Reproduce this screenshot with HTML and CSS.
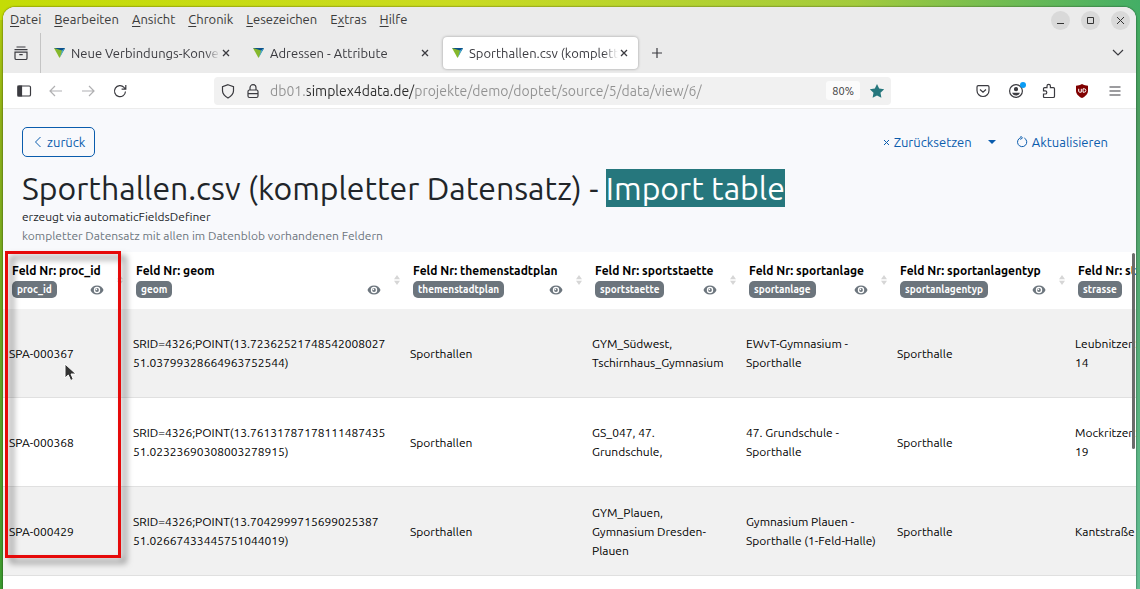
FILE: index.html
```html
<!DOCTYPE html>
<html lang="de">
<head>
  <meta charset="UTF-8" />
  <meta name="viewport" content="width=device-width, initial-scale=1.0" />
  <title>Sporthallen.csv (kompletter Datensatz) - Import table</title>
  <link rel="stylesheet" href="styles.css">
</head>
<body>
  <!-- shared icons -->
  <svg class="defs" width="0" height="0" aria-hidden="true">
    <symbol id="favicon" viewBox="0 0 11 10">
      <path d="M0 0h11L5.500 10z" fill="#86b82c"/>
      <path d="M0 0h11L9.500 3z" fill="#0b4f8a"/>
      <path d="M11 0L6 9.500 8 2.500z" fill="#45a5d8"/>
    </symbol>
    <symbol id="close" viewBox="0 0 8 8">
      <path d="M1 1l6 6M7 1L1 7" fill="none" stroke="currentColor" stroke-width="1.300"/>
    </symbol>
    <symbol id="eye" viewBox="0 0 14 10">
      <path d="M7 .5C3.800 .5 1.300 2.600.5 5c.8 2.400 3.300 4.500 6.500 4.500S12.700 7.400 13.500 5C12.700 2.600 10.200.5 7 .5z" fill="#6c757d"/>
      <circle cx="7" cy="5" r="3.200" fill="#fff"/>
      <circle cx="7" cy="5" r="1.900" fill="#6c757d"/>
      <circle cx="6.400" cy="4.400" r=".8" fill="#fff"/>
    </symbol>
    <symbol id="sort" viewBox="0 0 6 10">
      <path d="M3 0l3 4.200H0zM3 10L0 5.800h6z" fill="#d6d6d6"/>
    </symbol>
  </svg>

  <div class="window">
    <header class="titlebar">
      <nav class="menu">
        <a href="#"><u>D</u>atei</a>
        <a href="#"><u>B</u>earbeiten</a>
        <a href="#"><u>A</u>nsicht</a>
        <a href="#"><u>C</u>hronik</a>
        <a href="#"><u>L</u>esezeichen</a>
        <a href="#">E<u>x</u>tras</a>
        <a href="#"><u>H</u>ilfe</a>
      </nav>
      <div class="window-buttons">
        <button aria-label="Minimieren"><svg width="9" height="9"><path d="M1 7.500h7"/></svg></button>
        <button aria-label="Maximieren"><svg width="9" height="9"><path d="M1.500 1.500h6v6h-6z"/></svg></button>
        <button aria-label="Schließen"><svg width="9" height="9"><path d="M1 1l7 7M8 1L1 8"/></svg></button>
      </div>
    </header>

    <div class="tabbar">
      <button class="recent" aria-label="Zuletzt angesehen">
        <svg class="icon" width="16" height="16"><path d="M3.500 2h9M1.500 4.700h13M2 7.200h12v6q0 1.300-1.300 1.300H3.300Q2 14.500 2 13.200zM6.300 9.700h3.400"/></svg>
      </button>
      <div class="tab">
        <svg width="11" height="10"><use href="#favicon"/></svg>
        <span class="tab-title">Neue Verbindungs-Konvertierung</span>
        <button aria-label="Tab schließen"><svg width="8" height="8"><use href="#close"/></svg></button>
      </div>
      <div class="tab">
        <svg width="11" height="10"><use href="#favicon"/></svg>
        <span class="tab-title">Adressen - Attribute</span>
        <button aria-label="Tab schließen"><svg width="8" height="8"><use href="#close"/></svg></button>
      </div>
      <div class="tab active">
        <svg width="11" height="10"><use href="#favicon"/></svg>
        <span class="tab-title">Sporthallen.csv (kompletter Datensatz)</span>
        <button aria-label="Tab schließen"><svg width="8" height="8"><use href="#close"/></svg></button>
      </div>
      <button class="new-tab" aria-label="Neuer Tab">
        <svg class="icon" width="12" height="12"><path d="M6 1v10M1 6h10"/></svg>
      </button>
      <button class="all-tabs" aria-label="Alle Tabs">
        <svg class="icon" width="12" height="8"><path d="M1 1l5 5 5-5"/></svg>
      </button>
    </div>

    <div class="toolbar">
      <div class="nav-buttons">
        <button aria-label="Seitenleiste">
          <svg class="icon" width="16" height="16"><rect x="2" y="3" width="12.500" height="10" rx="1.300"/><path d="M2 3h3.500v10H2z" fill="#3b3b40"/></svg>
        </button>
        <button class="faded" aria-label="Zurück">
          <svg class="icon" width="16" height="16"><path d="M14 8H2.500M7 3L2 8l5 5"/></svg>
        </button>
        <button class="faded" aria-label="Vor">
          <svg class="icon" width="16" height="16"><path d="M2 8h11.500M9 3l5 5-5 5"/></svg>
        </button>
        <button aria-label="Neu laden">
          <svg class="icon" width="16" height="16"><path d="M13.500 8.500A5.500 5.500 0 1 1 12 4.300l1.500 1.500M13.800 2v4.200H9.600"/></svg>
        </button>
      </div>

      <div class="urlbar">
        <svg class="icon" width="16" height="16"><path d="M8 1.700l5.500 2v4.100c0 3.400-2.200 5.400-5.500 7.200-3.300-1.800-5.500-3.800-5.500-7.200V3.700z"/></svg>
        <svg class="icon" width="16" height="16"><rect x="3" y="7" width="10" height="7.500" rx="1.500"/><path d="M5 7V4.700a3 3 0 0 1 6 0V7M3 10.700h10"/></svg>
        <input class="url" type="text" aria-label="Adresse" value="db01.simplex4data.de/projekte/demo/doptet/source/5/data/view/6/">
        <button class="zoom">80%</button>
        <button aria-label="Lesezeichen bearbeiten">
          <svg width="16" height="16"><path d="M8 1l2.200 4.600 5 .7-3.700 3.500.9 5L8 12.400 3.600 14.800l.9-5L.8 6.300l5-.7z" fill="#26777d"/></svg>
        </button>
      </div>

      <div class="tools">
        <button aria-label="Pocket">
          <svg class="icon" width="16" height="16"><path d="M3.300 2.700h9.400q1.300 0 1.300 1.300v3.500a6 6 0 0 1-12 0V4q0-1.300 1.300-1.300zM5 6.500l3 2.800 3-2.800"/></svg>
        </button>
        <button class="account" aria-label="Konto">
          <svg class="icon" width="16" height="16"><circle cx="8" cy="8" r="6.400"/><circle cx="8" cy="6.200" r="1.500" fill="#3b3b40"/><path d="M5 10.300h6c-.5 1.200-1.700 1.700-3 1.700s-2.500-.5-3-1.700z" fill="#3b3b40"/></svg>
          <span class="dot"></span>
        </button>
        <button aria-label="Erweiterungen">
          <svg class="icon" width="16" height="16"><path d="M6 4.700V3a1.700 1.700 0 0 1 3.400 0v1.700h3q1.100 0 1.100 1.100v7.400q0 1.300-1.300 1.300H3.500q-1 0-1-1V11h1.700a1.600 1.600 0 0 0 0-3.200H2.500V5.700q0-1 1-1z"/></svg>
        </button>
        <button aria-label="uBlock Origin">
          <svg width="16" height="16"><path d="M8 1c2 1.200 4 1.700 6 1.700v5c0 3.300-2.500 5.600-6 7.300-3.500-1.700-6-4-6-7.300v-5C4 2.700 6 2.200 8 1z" fill="#800000"/><path d="M4.700 5.800v2.400q0 1 1 1h1.600V5.800M9 5.800h1.200a1.500 1.500 0 0 1 0 3.400H9z" fill="none" stroke="#fff"/></svg>
        </button>
        <button aria-label="Menü">
          <svg class="icon" width="16" height="16"><path d="M2.500 4h11M2.500 8h11M2.500 12h11"/></svg>
        </button>
      </div>
    </div>

    <main class="page">
      <section class="page-head">
        <div class="actions">
          <a class="back" href="#"><svg width="8" height="12"><path d="M6.500 1l-5 5 5 5"/></svg>zurück</a>
          <div class="links">
            <a href="#"><svg width="7" height="7"><path d="M1 1l5 5M6 1L1 6"/></svg>Zurücksetzen</a>
            <button class="caret" aria-label="Mehr"></button>
            <a href="#"><svg width="12" height="12"><path d="M8.300 2A4.600 4.600 0 1 1 5 1.600M4.300 0l2.200 1.700L4.500 3.700"/></svg>Aktualisieren</a>
          </div>
        </div>
        <h1>Sporthallen.csv (kompletter Datensatz) - <mark>Import table</mark></h1>
        <p>erzeugt via automaticFieldsDefiner</p>
        <p class="muted">kompletter Datensatz mit allen im Datenblob vorhandenen Feldern</p>
      </section>

      <section class="table-wrap">
        <table>
          <colgroup>
            <col class="c-id"><col class="c-geom"><col class="c-plan"><col class="c-staette"><col class="c-anlage"><col class="c-typ"><col class="c-strasse">
          </colgroup>
          <thead>
            <tr>
              <th><div class="field"><div class="field-info">Feld Nr: proc_id<div class="field-row"><span class="badge">proc_id</span><svg width="14" height="10"><use href="#eye"/></svg></div></div><svg width="6" height="10"><use href="#sort"/></svg></div></th>
              <th><div class="field"><div class="field-info">Feld Nr: geom<div class="field-row"><span class="badge">geom</span><svg width="14" height="10"><use href="#eye"/></svg></div></div><svg width="6" height="10"><use href="#sort"/></svg></div></th>
              <th><div class="field"><div class="field-info">Feld Nr: themenstadtplan<div class="field-row"><span class="badge">themenstadtplan</span><svg width="14" height="10"><use href="#eye"/></svg></div></div><svg width="6" height="10"><use href="#sort"/></svg></div></th>
              <th><div class="field"><div class="field-info">Feld Nr: sportstaette<div class="field-row"><span class="badge">sportstaette</span><svg width="14" height="10"><use href="#eye"/></svg></div></div><svg width="6" height="10"><use href="#sort"/></svg></div></th>
              <th><div class="field"><div class="field-info">Feld Nr: sportanlage<div class="field-row"><span class="badge">sportanlage</span><svg width="14" height="10"><use href="#eye"/></svg></div></div><svg width="6" height="10"><use href="#sort"/></svg></div></th>
              <th><div class="field"><div class="field-info">Feld Nr: sportanlagentyp<div class="field-row"><span class="badge">sportanlagentyp</span><svg width="14" height="10"><use href="#eye"/></svg></div></div><svg width="6" height="10"><use href="#sort"/></svg></div></th>
              <th><div class="field"><div class="field-info">Feld Nr: strasse<div class="field-row"><span class="badge">strasse</span><svg width="14" height="10"><use href="#eye"/></svg></div></div><svg width="6" height="10"><use href="#sort"/></svg></div></th>
            </tr>
          </thead>
          <tbody>
            <tr>
              <td>SPA-000367</td>
              <td>SRID=4326;POINT(13.72362521748542008027 51.03799328664963752544)</td>
              <td>Sporthallen</td>
              <td>GYM_Südwest,<br>Tschirnhaus_Gymnasium</td>
              <td>EWvT-Gymnasium -<br>Sporthalle</td>
              <td>Sporthalle</td>
              <td>Leubnitzer Str.<br>14</td>
            </tr>
            <tr>
              <td>SPA-000368</td>
              <td>SRID=4326;POINT(13.76131787178111487435 51.02323690308003278915)</td>
              <td>Sporthallen</td>
              <td>GS_047, 47.<br>Grundschule,</td>
              <td>47. Grundschule -<br>Sporthalle</td>
              <td>Sporthalle</td>
              <td>Mockritzer Str.<br>19</td>
            </tr>
            <tr>
              <td>SPA-000429</td>
              <td>SRID=4326;POINT(13.7042999715699025387 51.02667433445751044019)</td>
              <td>Sporthallen</td>
              <td>GYM_Plauen,<br>Gymnasium Dresden-<br>Plauen</td>
              <td>Gymnasium Plauen -<br>Sporthalle (1-Feld-Halle)</td>
              <td>Sporthalle</td>
              <td>Kantstraße 2</td>
            </tr>
          </tbody>
        </table>
        <div class="scroll-thumb"></div>
        <div class="highlight"></div>
        <svg class="cursor" width="13" height="19" viewBox="0 0 13 19"><path d="M1 1v14l3.300-3 2.400 5.500 2.600-1.200L7 11h5z" fill="#333" stroke="#fff"/></svg>
      </section>
    </main>
  </div>
</body>
</html>
```

FILE: styles.css
```css
* {
  margin: 0;
  padding: 0;
  box-sizing: border-box;
}

body {
  height: 100vh;
  padding: 7px 4px 0 3px;
  overflow: hidden;
  font-family: Ubuntu, "Noto Sans", sans-serif;
  font-size: 12px;
  color: #000;
  background:
    linear-gradient(#b6cf0a, #8fb018 20%, #3c9a30) left / 50% 100% no-repeat,
    linear-gradient(#3fae5f, #4c9d60 20%, #62c094) right / 50% 100% no-repeat;
}

/* desktop strip above the window */
body::before {
  content: '';
  position: absolute;
  top: 0;
  left: 0;
  right: 0;
  height: 20px;
  z-index: -1;
  background: linear-gradient(90deg, #c4dc06, #cadb20 40%, #a3cb3c 75%, #43ae66);
}

a {
  color: inherit;
  text-decoration: none;
}

button {
  display: flex;
  align-items: center;
  justify-content: center;
  border: 0;
  background: none;
  font: inherit;
  color: inherit;
}

svg {
  flex: none;
}

.defs {
  position: absolute;
}

.icon {
  fill: none;
  stroke: #3b3b40;
  stroke-width: 1.2;
}

.window {
  display: flex;
  flex-direction: column;
  height: 100%;
  overflow: hidden;
  border-radius: 12px 12px 0 0;
  background: #fff;
  box-shadow: 0 0 2px rgba(0, 0, 0, 0.7);
}

/* Menu and window buttons */
.titlebar {
  display: flex;
  justify-content: space-between;
  align-items: center;
  height: 26px;
  padding: 0 6px 0 7px;
  background: #ebebeb;
  color: #3b3b3b;
}

.menu {
  display: flex;
  gap: 13px;
  padding-bottom: 3px;
  font-size: 13px;
}

.menu u {
  text-underline-offset: 2px;
}

.window-buttons {
  display: flex;
  gap: 11px;
}

.window-buttons button {
  width: 19px;
  height: 19px;
  border-radius: 50%;
  background: #d9d9d9;
}

.window-buttons svg {
  fill: none;
  stroke: #333;
}

/* Tabs */
.tabbar {
  display: flex;
  align-items: center;
  height: 40px;
  background: #ebebeb;
  color: #3b3b40;
}

.recent {
  width: 38px;
  height: 100%;
  padding-right: 2px;
  border-right: 1px solid #c4c4c4;
}

.tab {
  display: flex;
  align-items: center;
  gap: 6px;
  width: 195px;
  height: 32px;
  margin-left: 4px;
  padding: 0 10px 0 9px;
  border-radius: 4px;
}

.tab-title {
  flex: 1;
  margin-right: -4px;
  overflow: hidden;
  white-space: nowrap;
  font-size: 13px;
  mask-image: linear-gradient(90deg, #000 90%, transparent);
}

.tab.active {
  background: #fff;
  box-shadow: 0 0 3px rgba(0, 0, 0, 0.35);
}

.new-tab {
  width: 38px;
}

.all-tabs {
  width: 36px;
  margin-left: auto;
}

/* Navigation toolbar */
.toolbar {
  display: flex;
  align-items: center;
  height: 36px;
  padding: 0 13px;
  border-bottom: 1px solid #ececec;
}

.nav-buttons {
  display: flex;
  gap: 16px;
}

.tools {
  display: flex;
  gap: 17px;
}

.faded {
  opacity: 0.4;
}

.urlbar {
  display: flex;
  flex: 1;
  align-items: center;
  gap: 9px;
  height: 28px;
  margin: 0 84px 0 86px;
  padding: 0 6px;
  border-radius: 4px;
  background: #f1f1f1;
}

/* the domain is darker than the rest of the address */
.url {
  flex: 1;
  min-width: 0;
  border: 0;
  font: inherit;
  font-size: 14px;
  color: transparent;
  background: linear-gradient(90deg, #919191 37px, #2b2b2b 37px, #2b2b2b 145px, #919191 145px);
  background-clip: text;
}

.zoom {
  height: 19px;
  padding: 0 6px;
  border-radius: 3px;
  background: #fbfbfb;
  color: #3b3b40;
  font-size: 11px;
}

.account {
  position: relative;
}

.dot {
  position: absolute;
  top: -1px;
  right: -2px;
  width: 6px;
  height: 6px;
  border-radius: 50%;
  background: #0a9cf5;
}

/* Page header */
.page-head {
  height: 143px;
  padding: 18px 28px 0 19px;
  background: #f8f9fc;
  color: #212529;
}

.actions {
  display: flex;
  justify-content: space-between;
  align-items: center;
  color: #0a5cad;
  font-size: 13px;
}

.actions svg {
  fill: none;
  stroke: #0a5cad;
}

.back {
  display: flex;
  align-items: center;
  gap: 5px;
  height: 30px;
  padding: 0 9px 0 11px;
  border: 1px solid #0a5cad;
  border-radius: 5px;
}

.links {
  display: flex;
  align-items: center;
  gap: 16px;
}

.links a {
  display: flex;
  align-items: center;
  gap: 4px;
}

.caret {
  margin-right: 4px;
  border: 4px solid transparent;
  border-top-color: #0a5cad;
  border-bottom: 0;
}

h1 {
  margin-top: 12px;
  font-size: 32px;
  font-weight: 400;
  line-height: 38px;
  white-space: nowrap;
}

mark {
  display: inline-block;
  background: #26777d;
  color: #fff;
}

.page-head p {
  line-height: 19px;
}

.page-head .muted {
  color: #6c757d;
}

/* Data table */
.table-wrap {
  position: relative;
}

table {
  table-layout: fixed;
  width: 1200px;
  border-collapse: separate;
  border-spacing: 0;
  line-height: 19px;
}

.c-id { width: 124px; }
.c-geom { width: 277px; }
.c-plan { width: 182px; }
.c-staette { width: 154px; }
.c-anlage { width: 151px; }
.c-typ { width: 178px; }

th {
  height: 57px;
  padding: 0 4px 2px 9px;
  text-align: left;
  font-weight: 600;
  white-space: nowrap;
}

.field {
  display: flex;
  align-items: center;
  gap: 13px;
}

.field-info {
  flex: 1;
  min-width: 0;
}

.field-row {
  display: flex;
  align-items: center;
  justify-content: space-between;
  margin-top: 1px;
}

.badge {
  padding: 0 5px;
  border-radius: 5px;
  background: #6c757d;
  color: #fff;
  font-size: 10px;
  line-height: 17px;
}

td {
  height: 89px;
  padding: 0 6px;
  border-bottom: 1px solid #e0e0e0;
}

tbody tr:nth-child(odd) {
  background: #f1f1f1;
}

.scroll-thumb {
  position: absolute;
  top: 1px;
  right: 1px;
  width: 3px;
  height: 196px;
  border-radius: 2px;
  background: #6b6b6b;
}

/* Marked column */
.highlight {
  position: absolute;
  top: -1px;
  left: 2px;
  width: 116px;
  height: 307px;
  border: 3px solid #e60a0a;
  filter: drop-shadow(5px 5px 3px rgba(0, 0, 0, 0.5));
}

.cursor {
  position: absolute;
  top: 111px;
  left: 61px;
}
```
